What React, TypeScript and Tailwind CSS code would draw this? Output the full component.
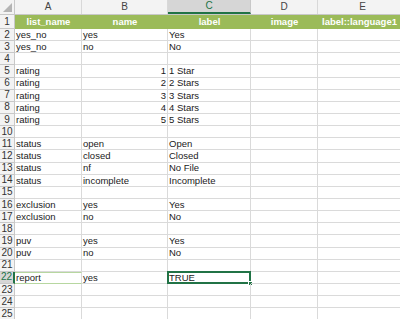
import React from "react"

const COLS = [
  { key: "A", w: 67 },
  { key: "B", w: 86 },
  { key: "C", w: 83 },
  { key: "D", w: 67 },
  { key: "E", w: 90 },
]

type Row = [string, string, string] | null

const ROWS: Row[] = [
  ["yes_no", "yes", "Yes"],
  ["yes_no", "no", "No"],
  null,
  ["rating", "1", "1 Star"],
  ["rating", "2", "2 Stars"],
  ["rating", "3", "3 Stars"],
  ["rating", "4", "4 Stars"],
  ["rating", "5", "5 Stars"],
  null,
  ["status", "open", "Open"],
  ["status", "closed", "Closed"],
  ["status", "nf", "No File"],
  ["status", "incomplete", "Incomplete"],
  null,
  ["exclusion", "yes", "Yes"],
  ["exclusion", "no", "No"],
  null,
  ["puv", "yes", "Yes"],
  ["puv", "no", "No"],
  null,
  ["report", "yes", "TRUE"],
  null,
  null,
  null,
  null,
]

const HEADERS = ["list_name", "name", "label", "image", "label::language1"]

export default function App() {
  return (
    <div
      className="w-[400px] h-[319px] overflow-hidden bg-white text-[9.5px] leading-none text-[#1a1a1a]"
      style={{ fontFamily: '"Liberation Sans", Arial, sans-serif' }}
    >
      {/* column letters */}
      <div className="flex h-[15px] bg-[#f3f3f3] border-b border-[#c8c8c8]">
        <div className="relative w-[15px] shrink-0 border-r border-[#c8c8c8]">
          <svg className="absolute right-[2px] bottom-[2px]" width="9" height="9" viewBox="0 0 9 9">
            <polygon points="9,0 9,9 0,9" fill="#b4b4b4" />
          </svg>
        </div>
        {COLS.map((c) => (
          <div
            key={c.key}
            className={
              c.key === "C"
                ? "shrink-0 flex items-center justify-center bg-[#d6d6d6] text-[#217346] border-r border-[#c8c8c8] border-b-2 border-b-[#217346] text-[10px]"
                : "shrink-0 flex items-center justify-center text-[#444] border-r border-[#d8d8d8] text-[10px]"
            }
            style={{ width: c.w }}
          >
            {c.key}
          </div>
        ))}
      </div>

      {/* row 1 header */}
      <div className="flex h-[14px]">
        <RowNum n={1} />
        {COLS.map((c, i) => (
          <div
            key={c.key}
            className={
              "shrink-0 flex items-center bg-[#9bbb59] text-white font-bold text-[9.5px] " +
              (i === 4 ? "justify-start pl-[4px]" : "justify-center")
            }
            style={{ width: c.w }}
          >
            <span className="whitespace-nowrap">{HEADERS[i]}</span>
          </div>
        ))}
      </div>

      {ROWS.map((r, idx) => {
        const n = idx + 2
        const sel = n === 22
        return (
          <div key={n} className="flex h-[12.15px]">
            <RowNum n={n} selected={sel} />
            {COLS.map((c, ci) => {
              const v = r ? r[ci] ?? "" : ""
              const isNum = ci === 1 && /^\d+$/.test(v)
              const isSelCell = sel && ci === 2
              const isA22 = sel && ci === 0
              return (
                <div
                  key={c.key}
                  className={
                    "relative shrink-0 flex items-center px-[1px] whitespace-nowrap border-r border-b border-[#dadada] " +
                    (isNum ? "justify-end " : "") +
                    (isA22 ? "border-t border-t-[#b7d7a0] border-b-[#b7d7a0] " : "")
                  }
                  style={{ width: c.w }}
                >
                  {v}
                  {isSelCell && (
                    <>
                      <div className="absolute -left-[1px] -top-[1px] -right-[1px] -bottom-[1px] border-2 border-[#217346]" />
                      <div className="absolute -right-[3px] -bottom-[3px] w-[5px] h-[5px] bg-[#217346] border border-white" />
                    </>
                  )}
                </div>
              )
            })}
          </div>
        )
      })}
    </div>
  )
}

function RowNum({ n, selected }: { n: number; selected?: boolean }) {
  return (
    <div
      className={
        selected
          ? "w-[15px] shrink-0 flex items-center justify-center bg-[#d6d6d6] text-[#217346] border-r-2 border-r-[#217346] border-b border-[#c8c8c8] text-[10px]"
          : "w-[15px] shrink-0 flex items-center justify-center bg-[#f3f3f3] text-[#333] border-r border-b border-[#c8c8c8] text-[10px]"
      }
    >
      {n}
    </div>
  )
}
